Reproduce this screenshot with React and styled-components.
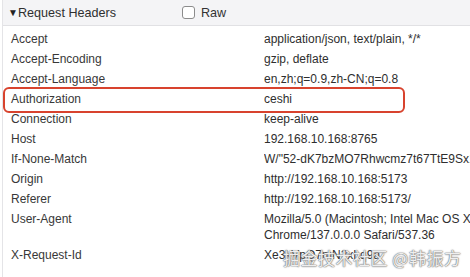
import styled, { createGlobalStyle } from "styled-components";

const GlobalStyle = createGlobalStyle`
  html, body {
    margin: 0;
    padding: 0;
    background: #ffffff;
    overflow: hidden;
  }
  body {
    font-family: "Liberation Sans", Arial, Helvetica, sans-serif;
  }
`;

const Panel = styled.section`
  position: relative;
  width: 467px;
  height: 277px;
  margin-left: 2px;
  border-left: 1px solid #e4e4e7;
  overflow: hidden;
`;

const Header = styled.div`
  display: flex;
  align-items: center;
  height: 25px;
  background: #f4f4f6;
  border-bottom: 1px solid #e1e1e4;
  padding-left: 6px;
  color: #2f2f2f;
  font-size: 12.6px;
`;

const Title = styled.div`
  display: flex;
  align-items: center;
  width: 173px;
`;

const Caret = styled.span`
  font-size: 10px;
  width: 10px;
  margin-left: -1px;
  color: #222;
`;

const RawToggle = styled.label`
  display: flex;
  align-items: center;
  gap: 6px;
  font-size: 12.6px;
  color: #333;
`;

const Checkbox = styled.span`
  display: inline-block;
  width: 11px;
  height: 11px;
  border: 1px solid #8c8c8c;
  border-radius: 3px;
  background: #fff;
`;

const List = styled.div`
  padding-top: 3px;
`;

const Row = styled.div`
  position: relative;
  display: grid;
  grid-template-columns: 253px 1fr;
  padding: 2px 0 2px 8px;
  line-height: 16px;
  font-size: 12px;
  white-space: nowrap;

  ${(p) =>
    p.$highlight &&
    `
    &::after {
      content: "";
      position: absolute;
      top: -2px;
      left: 0;
      width: 402px;
      height: 26px;
      box-sizing: border-box;
      border: 2.5px solid #d8432e;
      border-radius: 6px;
    }
  `}
`;

const Name = styled.span`
  color: #383838;
`;

const Value = styled.span`
  color: #2e2e2e;
  overflow: hidden;
`;

const Line = styled.div``;

const Watermark = styled.div`
  position: absolute;
  left: 280px;
  top: 245px;
  font-family: "Noto Sans CJK SC", "Liberation Sans", sans-serif;
  font-size: 17px;
  letter-spacing: 0.5px;
  color: rgba(255, 255, 255, 0.88);
  text-shadow: 0 0 1px #777, 0 0 1px #777, 0 0 2px #999;
  white-space: nowrap;
`;

const headers = [
  ["Accept", ["application/json, text/plain, */*"]],
  ["Accept-Encoding", ["gzip, deflate"]],
  ["Accept-Language", ["en,zh;q=0.9,zh-CN;q=0.8"]],
  ["Authorization", ["ceshi"], true],
  ["Connection", ["keep-alive"]],
  ["Host", ["192.168.10.168:8765"]],
  ["If-None-Match", ['W/"52-dK7bzMO7Rhwcmz7t67TtE9Sx1Qk"']],
  ["Origin", ["http://192.168.10.168:5173"]],
  ["Referer", ["http://192.168.10.168:5173/"]],
  [
    "User-Agent",
    [
      "Mozilla/5.0 (Macintosh; Intel Mac OS X 10_15_7) AppleWebKit/537.36 (KHTML, like Gecko)",
      "Chrome/137.0.0.0 Safari/537.36",
    ],
  ],
  ["X-Request-Id", ["Xe3kVpQ7mN2xLq9a"]],
];

function App() {
  return (
    <>
      <GlobalStyle />
      <Panel>
        <Header>
          <Title>
            <Caret>▼</Caret>
            Request Headers
          </Title>
          <RawToggle>
            <Checkbox />
            Raw
          </RawToggle>
        </Header>
        <List>
          {headers.map(([name, lines, hl]) => (
            <Row key={name} $highlight={hl}>
              <Name>{name}</Name>
              <Value>
                {lines.map((l) => (
                  <Line key={l}>{l}</Line>
                ))}
              </Value>
            </Row>
          ))}
        </List>
        <Watermark>掘金技术社区 @韩振方</Watermark>
      </Panel>
    </>
  );
}

export default App;
